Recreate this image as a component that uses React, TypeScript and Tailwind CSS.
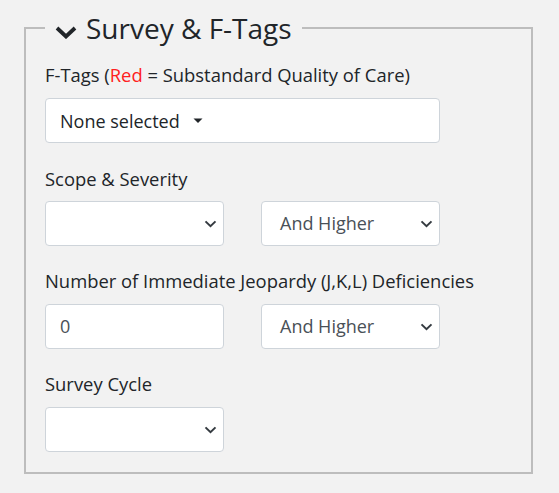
function Chevron() {
  return (
    <svg width="13" height="8" viewBox="0 0 13 8" className="shrink-0">
      <path d="M1.5 1.4 L6.5 6.2 L11.5 1.4" fill="none" stroke="#343a40" strokeWidth="2" />
    </svg>
  )
}

function SelectBox({ value }: { value?: string }) {
  return (
    <div className="flex items-center justify-between h-[45px] w-[179px] bg-white border border-[#ced4da] rounded-[4px] pl-[18px] pr-[6px]">
      <span className="text-[18px] text-[#495057]">{value}</span>
      <Chevron />
    </div>
  )
}

export default function App() {
  return (
    <div
      className="min-h-[493px] bg-[#f2f2f2] pt-[8px] pl-[24px] text-[#212529]"
      style={{ fontFamily: '"Open Sans", "Noto Sans", sans-serif' }}
    >
      <fieldset className="w-[509px] border-2 border-[#bdbdbd] px-[19px] pb-[20px]">
        <legend className="px-[10px] flex items-center gap-[9px]">
          <svg width="22" height="13" viewBox="0 0 22 13" className="mt-[9px]">
            <path d="M2 2 L11 10.5 L20 2" fill="none" stroke="#212529" strokeWidth="3.8" />
          </svg>
          <span className="text-[28px] leading-[40px]">Survey &amp; F-Tags</span>
        </legend>

        <div className="text-[18.4px] leading-[27px] mt-[13px]">
          F-Tags (<span className="text-[#ff2020]">Red</span> = Substandard Quality of Care)
        </div>
        <div className="mt-[10px] flex items-center h-[45px] w-[395px] bg-white border border-[#ced4da] rounded-[4px] pl-[14px]">
          <span className="text-[18px] leading-[24px]">None selected</span>
          <svg width="10" height="6" viewBox="0 0 10 6" className="ml-[13px]">
            <path d="M0.5 0.5 H9.5 L5 5 Z" fill="#212529" />
          </svg>
        </div>

        <div className="text-[18.4px] leading-[27px] mt-[22px]">Scope &amp; Severity</div>
        <div className="mt-[9px] flex gap-[37px]">
          <SelectBox />
          <SelectBox value="And Higher" />
        </div>

        <div className="text-[18.4px] leading-[27px] mt-[21px]">
          Number of Immediate Jeopardy (J,K,L) Deficiencies
        </div>
        <div className="mt-[10px] flex gap-[37px]">
          <div className="flex items-center h-[45px] w-[179px] bg-white border border-[#ced4da] rounded-[4px] pl-[14px]">
            <span className="text-[18px] text-[#495057]">0</span>
          </div>
          <SelectBox value="And Higher" />
        </div>

        <div className="text-[18.4px] leading-[27px] mt-[21px]">Survey Cycle</div>
        <div className="mt-[10px]">
          <SelectBox />
        </div>
      </fieldset>
    </div>
  )
}
